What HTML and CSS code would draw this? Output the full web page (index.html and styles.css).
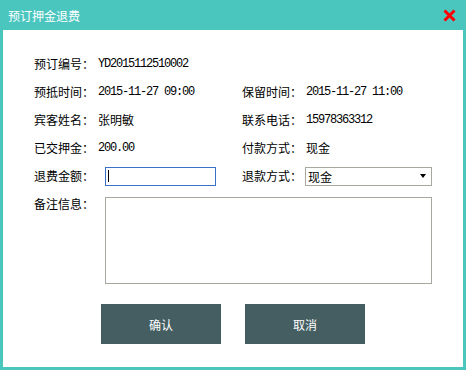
FILE: index.html
```html
<!DOCTYPE html>
<html lang="zh-CN">
<head>
  <meta charset="UTF-8" />
  <title>预订押金退费</title>
  <link rel="stylesheet" href="styles.css">
</head>
<body>
  <div class="dialog">
    <div class="titlebar">
      <span class="title">预订押金退费</span>
      <svg class="close" width="13" height="13" viewBox="0 0 13 13">
        <path d="M1.5 1.5 L11.5 11.5 M11.5 1.5 L1.5 11.5" stroke="#f00" stroke-width="3" />
      </svg>
    </div>

    <div class="content">
      <div class="row">
        <div class="field">
          <span class="label">预订编号：</span>
          <span class="value num">YD2015112510002</span>
        </div>
      </div>
      <div class="row">
        <div class="field">
          <span class="label">预抵时间：</span>
          <span class="value num">2015-11-27 09:00</span>
        </div>
        <div class="field">
          <span class="label">保留时间：</span>
          <span class="value num">2015-11-27 11:00</span>
        </div>
      </div>
      <div class="row">
        <div class="field">
          <span class="label">宾客姓名：</span>
          <span class="value">张明敏</span>
        </div>
        <div class="field">
          <span class="label">联系电话：</span>
          <span class="value num">15978363312</span>
        </div>
      </div>
      <div class="row">
        <div class="field">
          <span class="label">已交押金：</span>
          <span class="value num">200.00</span>
        </div>
        <div class="field">
          <span class="label">付款方式：</span>
          <span class="value">现金</span>
        </div>
      </div>
      <div class="row">
        <div class="field">
          <span class="label">退费金额：</span>
          <div class="text-input"><span class="caret"></span></div>
        </div>
        <div class="field">
          <span class="label">退款方式：</span>
          <div class="select">
            <span>现金</span>
            <span class="arrow"></span>
          </div>
        </div>
      </div>
      <div class="row remark">
        <span class="label">备注信息：</span>
        <div class="textarea"></div>
      </div>

      <div class="buttons">
        <button class="btn">确认</button>
        <button class="btn">取消</button>
      </div>
    </div>
  </div>
</body>
</html>
```

FILE: styles.css
```css
body {
  margin: 0;
  font-family: "Noto Sans CJK SC", sans-serif;
  font-size: 12px;
  color: #000;
}
.dialog {
  width: 466px;
  height: 370px;
  box-sizing: border-box;
  background-color: #4bc6bf;
  padding: 0 3px 3px;
  display: flex;
  flex-direction: column;
}
.titlebar {
  height: 30px;
  display: flex;
  align-items: center;
  justify-content: space-between;
  padding: 0 7px 0 5px;
}
.title {
  color: #fff;
  font-size: 12px;
}
.close {
  margin-top: 1px;
}
.content {
  flex: 1;
  background-color: #fff;
  padding: 20px 0 0 31px;
}
.row {
  display: flex;
  height: 28px;
  align-items: center;
}
.field {
  display: flex;
  align-items: center;
  width: 208px;
}
.label {
  width: 64px;
  flex: none;
  line-height: 14px;
}
.value {
  line-height: 14px;
}
.num {
  font-family: "Liberation Mono", monospace;
  font-size: 12px;
  letter-spacing: -1.2px;
}
.text-input {
  box-sizing: border-box;
  margin-left: 7px;
  width: 111px;
  height: 19px;
  border: 1px solid #3a70c8;
  display: flex;
  align-items: center;
  padding-left: 2px;
}
.caret {
  width: 1px;
  height: 12px;
  background-color: #000;
}
.select {
  box-sizing: border-box;
  width: 127px;
  height: 19px;
  margin-left: -1px;
  border: 1px solid #a8a89e;
  display: flex;
  align-items: center;
  justify-content: space-between;
  padding: 0 5px 0 2px;
}
.arrow {
  width: 0;
  height: 0;
  border-left: 3.5px solid transparent;
  border-right: 3.5px solid transparent;
  border-top: 4px solid #000;
}
.remark {
  height: auto;
  align-items: flex-start;
  margin-top: 7px;
}
.textarea {
  margin-left: 7px;
  width: 325px;
  height: 85px;
  border: 1px solid #a8a89e;
}
.buttons {
  display: flex;
  gap: 24px;
  margin: 20px 0 0 67px;
}
.btn {
  width: 120px;
  height: 40px;
  border: none;
  background-color: #455e62;
  color: #fff;
  font-family: "Noto Sans CJK SC", sans-serif;
  font-size: 12px;
  padding: 0;
}
```
